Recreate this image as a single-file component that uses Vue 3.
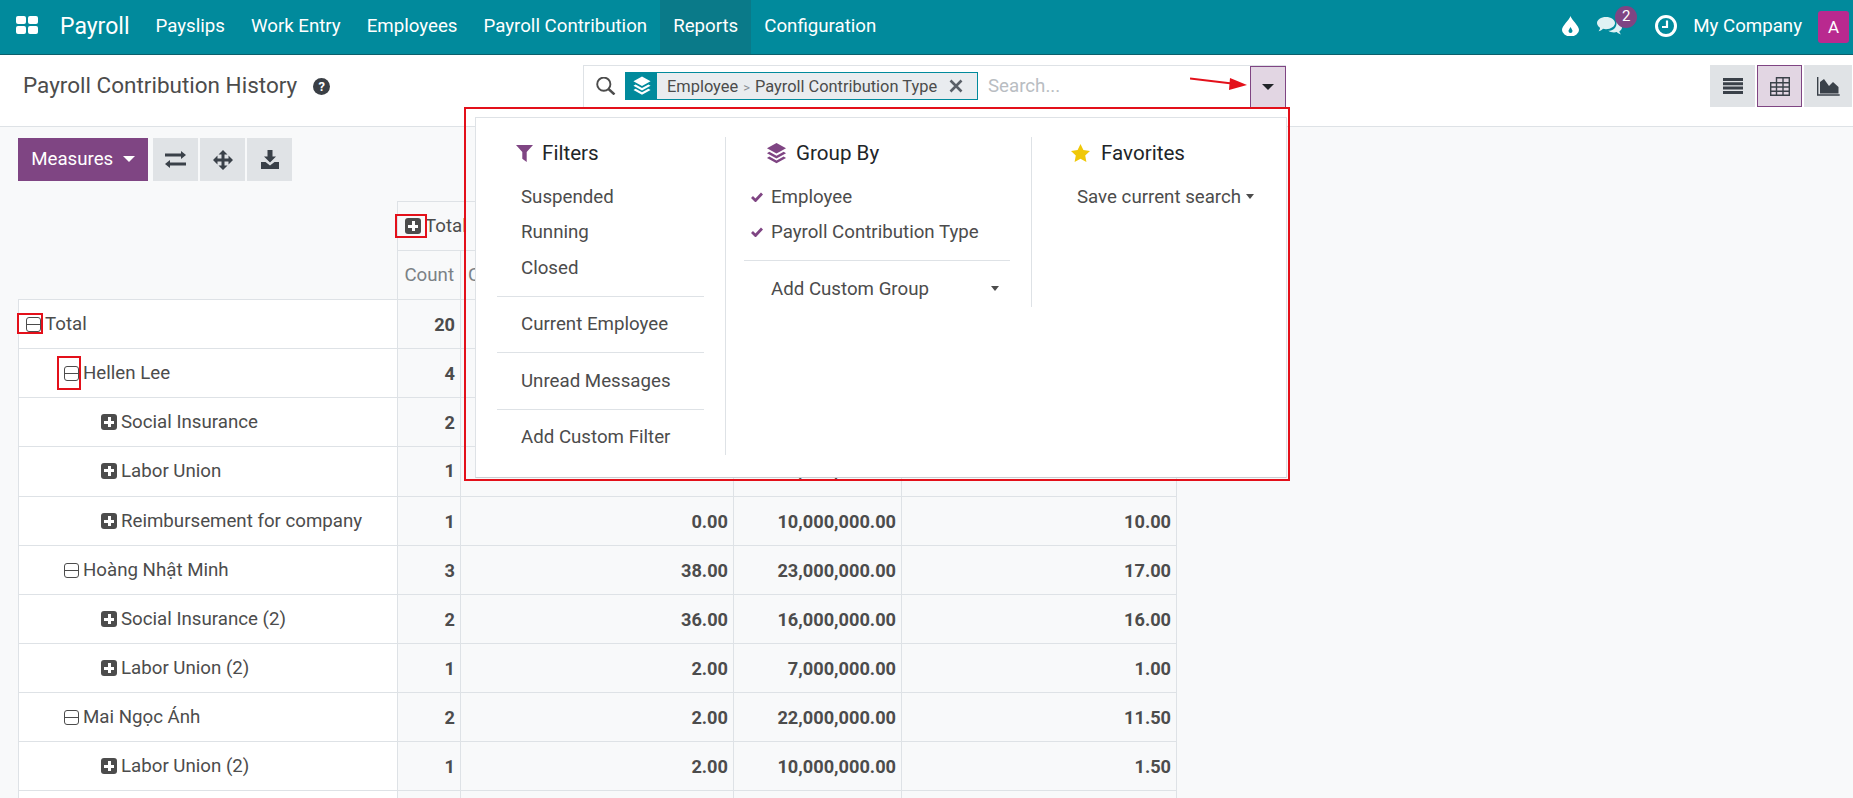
<script setup>
const navItems = ['Payslips', 'Work Entry', 'Employees', 'Payroll Contribution', 'Reports', 'Configuration']

const columns = ['Count', 'Contribution Amount of Employee', 'Amount', 'Rate']

const rows = [
  { label: 'Total', level: 0, open: true, values: ['20', '78.00', '85,000,000.00', '52.00'] },
  { label: 'Hellen Lee', level: 1, open: true, values: ['4', '2.00', '20,000,000.00', '12.00'] },
  { label: 'Social Insurance', level: 2, values: ['2', '2.00', '5,000,000.00', '1.00'] },
  { label: 'Labor Union', level: 2, tall: true, values: ['1', '0.00', '5,000,000.00', '1.00'] },
  { label: 'Reimbursement for company', level: 2, values: ['1', '0.00', '10,000,000.00', '10.00'] },
  { label: 'Hoàng Nhật Minh', level: 1, open: true, values: ['3', '38.00', '23,000,000.00', '17.00'] },
  { label: 'Social Insurance (2)', level: 2, values: ['2', '36.00', '16,000,000.00', '16.00'] },
  { label: 'Labor Union (2)', level: 2, values: ['1', '2.00', '7,000,000.00', '1.00'] },
  { label: 'Mai Ngọc Ánh', level: 1, open: true, values: ['2', '2.00', '22,000,000.00', '11.50'] },
  { label: 'Labor Union (2)', level: 2, values: ['1', '2.00', '10,000,000.00', '1.50'] },
  { label: '', level: 2, empty: true, values: ['', '', '', ''] }
]
</script>

<template>
  <div class="page">
    <header class="navbar">
      <svg class="apps" width="22" height="18" viewBox="0 0 22 18">
        <rect x="0" y="0" width="10" height="8" rx="2" />
        <rect x="12" y="0" width="10" height="8" rx="2" />
        <rect x="0" y="10" width="10" height="8" rx="2" />
        <rect x="12" y="10" width="10" height="8" rx="2" />
      </svg>
      <span class="brand">Payroll</span>
      <a v-for="item in navItems" :key="item" class="nav-item" :class="{ active: item === 'Reports' }">{{ item }}</a>
      <div class="systray">
        <svg class="tray-drop" width="17" height="20" viewBox="0 0 17 20">
          <path fill-rule="evenodd" d="M8.5 0C9.5 4 17 9.500 17 14a8.500 6.500 0 0 1-17 0C0 9.500 7.500 4 8.500 0ZM8.500 11C7.500 13 6.500 14 6.500 15a2 2 0 0 0 4 0C10.500 14 9.500 13 8.500 11Z" />
        </svg>
        <div class="tray-chat">
          <svg width="25" height="20" viewBox="0 0 25 20">
            <path d="M9 1c5 0 9 2.700 9 6s-4 6.200-9 6.200c-1 0-2-.1-3-.4C4.700 14.400 3 15 1.500 15.300 2.500 14 3 13 3 11.700 1.200 10.500 0 8.800 0 7c0-3.300 4-6 9-6Z" />
            <path d="M19.500 6c3 1 5.500 2.800 5.500 5.200 0 1.600-1 3-2.600 4 .1 1.100.6 2 1.600 3.200-1.500-.3-3-.9-4.200-2.300-.9.2-1.800.3-2.800.3-2.200 0-4.300-.6-5.700-1.600 5 0 8.700-3.200 8.200-8.800Z" />
          </svg>
          <span class="badge">2</span>
        </div>
        <svg class="tray-clock" width="24" height="24" viewBox="0 0 24 24">
          <circle cx="12" cy="12" r="9.500" fill="none" stroke="#fff" stroke-width="3" />
          <path d="M13 6.500V13H8" fill="none" stroke="#fff" stroke-width="2.200" />
        </svg>
        <span class="company">My Company</span>
        <span class="avatar">A</span>
      </div>
    </header>

    <section class="control-panel">
      <div class="title">
        Payroll Contribution History
        <span class="help">?</span>
      </div>
      <div class="searchbar">
        <svg class="search-icon" width="20" height="18" viewBox="0 0 20 18">
          <circle cx="7.800" cy="7.200" r="6.600" fill="none" stroke="#4c4c4c" stroke-width="1.900" />
          <path d="M12.500 12l6 5.500" stroke="#4c4c4c" stroke-width="2.400" />
        </svg>
        <div class="facet">
          <span class="facet-icon">
            <svg width="18" height="20" viewBox="0 0 21 22">
              <path d="M10.500 0l10 5.500-10 5.500L.5 5.500z" fill="#fff" />
              <path d="M3 9.200l7.500 4.100L18 9.200l2.500 1.500-10 5.500-10-5.500z" fill="#fff" />
              <path d="M3 14.200l7.500 4.100 7.500-4.100 2.500 1.500-10 5.500-10-5.500z" fill="#fff" />
            </svg>
          </span>
          <span class="facet-text">Employee<span class="facet-sep">&gt;</span>Payroll Contribution Type</span>
          <svg class="facet-close" width="14" height="14" viewBox="0 0 14 14"><path d="M1.500 1.500l11 11M12.500 1.500l-11 11" stroke="#5a6068" stroke-width="2.600" /></svg>
        </div>
        <span class="placeholder">Search...</span>
        <button class="search-toggle"><i class="caret dark"></i></button>
      </div>
      <div class="views">
        <button class="view-btn">
          <svg width="20" height="16" viewBox="0 0 20 16"><path d="M0 0h20v3H0zM0 4.300h20v3H0zM0 8.600h20v3H0zM0 12.900h20V16H0z" fill="#3a4149" /></svg>
        </button>
        <button class="view-btn on">
          <svg width="20" height="19" viewBox="0 0 20 19">
            <path d="M6.500.7h12.800v17.600H.7V5.800h5.800zM.7 5.800h18.600M.7 10h18.600M.7 14.200h18.600M6.500 5.800v12.500M13 .7v17.600" fill="none" stroke="#3a4149" stroke-width="1.400" />
          </svg>
        </button>
        <button class="view-btn">
          <svg width="23" height="19" viewBox="0 0 23 19">
            <path d="M.7 0v18h22" fill="none" stroke="#3a4149" stroke-width="1.400" />
            <path d="M3 16.500V5l4-3 5 7 4-4 5.500 5v6.500z" fill="#3a4149" />
          </svg>
        </button>
      </div>
    </section>

    <main class="content">
      <div class="toolbar">
        <button class="measures">Measures <i class="caret light"></i></button>
        <button class="tool-btn">
          <svg width="21" height="17" viewBox="0 0 21 17"><path d="M16 0v2.500H0v3h16V8l5-4zM5 9L0 13l5 4v-2.500h16v-3H5z" fill="#3a4149" /></svg>
        </button>
        <button class="tool-btn">
          <svg width="20" height="20" viewBox="0 0 20 20"><path d="M10 0l4.500 4.500h-3v4h4v-3L20 10l-4.500 4.500v-3h-4v4h3L10 20l-4.500-4.500h3v-4h-4v3L0 10l4.500-4.500v3h4v-4h-3z" fill="#3a4149" /></svg>
        </button>
        <button class="tool-btn">
          <svg width="18" height="19" viewBox="0 0 18 19"><path d="M6.500 0h5v6.500H15l-6 6-6-6h3.500zM0 12h4.500L9 15.500 13.500 12H18v7H0z" fill="#3a4149" /></svg>
        </button>
      </div>

      <table class="pivot">
        <colgroup>
          <col class="c-label" /><col class="c-count" /><col class="c-a" /><col class="c-b" /><col class="c-c" />
        </colgroup>
        <thead>
          <tr class="head-row">
            <th class="blank" rowspan="2"></th>
            <th class="head-total" colspan="4">
              <span class="sq-plus"></span><span>Total</span>
            </th>
          </tr>
          <tr class="head-row">
            <th v-for="(col, j) in columns" :key="col" class="head-col" :class="{ long: j === 1 }"><span>{{ col }}</span></th>
          </tr>
        </thead>
        <tbody>
          <tr v-for="(row, i) in rows" :key="i" :class="{ tall: row.tall }">
            <td class="label" :class="'lvl-' + row.level">
              <template v-if="!row.empty">
                <span :class="row.open ? 'sq-minus' : 'sq-plus'"></span>{{ row.label }}
              </template>
            </td>
            <td v-for="(val, j) in row.values" :key="j" class="num">{{ val }}</td>
          </tr>
        </tbody>
      </table>
    </main>

    <!-- search dropdown, open over the table -->
    <div class="menu">
      <div class="menu-col col-filters">
        <div class="menu-head head-filters">
          <svg width="17" height="17" viewBox="0 0 17 17"><path d="M0 0h17l-6.300 7v10l-4.400-3.200V7z" fill="#7f4583" /></svg>
          Filters
        </div>
        <div class="menu-item">Suspended</div>
        <div class="menu-item">Running</div>
        <div class="menu-item">Closed</div>
        <div class="menu-sep"></div>
        <div class="menu-item">Current Employee</div>
        <div class="menu-sep"></div>
        <div class="menu-item">Unread Messages</div>
        <div class="menu-sep"></div>
        <div class="menu-item">Add Custom Filter</div>
      </div>
      <div class="menu-col col-group">
        <div class="menu-head head-group">
          <svg width="21" height="21" viewBox="0 0 21 22">
            <path d="M10.500 0l10 5.500-10 5.500L.5 5.500z" fill="#7f4583" />
            <path d="M3 9.200l7.500 4.100L18 9.200l2.500 1.500-10 5.500-10-5.500z" fill="#7f4583" />
            <path d="M3 14.200l7.500 4.100 7.500-4.100 2.500 1.500-10 5.500-10-5.500z" fill="#7f4583" />
          </svg>
          Group By
        </div>
        <div class="menu-item checked">
          <svg width="12" height="10" viewBox="0 0 12 10"><path d="M1 5l3.500 3.500L11 1.500" fill="none" stroke="#7f4583" stroke-width="2.800" /></svg>
          Employee
        </div>
        <div class="menu-item checked">
          <svg width="12" height="10" viewBox="0 0 12 10"><path d="M1 5l3.500 3.500L11 1.500" fill="none" stroke="#7f4583" stroke-width="2.800" /></svg>
          Payroll Contribution Type
        </div>
        <div class="menu-sep"></div>
        <div class="menu-item custom-group">Add Custom Group <i class="caret small"></i></div>
      </div>
      <div class="menu-col col-fav">
        <div class="menu-head head-fav">
          <svg width="19" height="18" viewBox="0 0 19 18"><path d="M9.500 0l2.900 6 6.600.9-4.800 4.600 1.200 6.500-5.900-3.200L3.600 18l1.200-6.500L0 6.900 6.600 6z" fill="#f0c808" /></svg>
          Favorites
        </div>
        <div class="menu-item save">Save current search<i class="caret small"></i></div>
      </div>
    </div>

    <!-- red annotations drawn on the screenshot -->
    <div class="mark mark-menu"></div>
    <div class="mark mark-head"></div>
    <div class="mark mark-total"></div>
    <div class="mark mark-hellen"></div>
    <svg class="mark-arrow" width="58" height="14" viewBox="0 0 58 14">
      <path d="M0 1.500L42 6.500" stroke="#e3101a" stroke-width="2" />
      <path d="M40 1L57 8 39 13z" fill="#e3101a" />
    </svg>
  </div>
</template>

<style scoped>
.page {
  position: relative;
  width: 1853px;
  height: 798px;
  overflow: hidden;
  background: #f8f9fa;
  font-family: Roboto, "Noto Sans", sans-serif;
  font-size: 18.700px;
  color: #4c4c4c;
}
.navbar {
  display: flex;
  align-items: center;
  height: 54px;
  background: #018a9c;
  border-bottom: 1px solid #0b5f6b;
  color: #fff;
}
.apps {
  margin-left: 16px;
  margin-bottom: 4px;
  fill: #fff;
}
.brand {
  margin-left: 22px;
  margin-right: 13px;
  margin-bottom: 1px;
  font-size: 23px;
}
.nav-item {
  display: flex;
  align-items: center;
  height: 100%;
  padding: 0 13px 2px;
  box-sizing: border-box;
  font-size: 18.700px;
}
.nav-item.active {
  background: #0a7a89;
}
.systray {
  display: flex;
  align-items: center;
  margin-left: auto;
}
.tray-drop {
  fill: #fff;
  margin-right: 18px;
  margin-bottom: 2px;
}
.tray-chat {
  position: relative;
  width: 25px;
  height: 20px;
  margin-right: 32px;
  margin-bottom: 2px;
  fill: #dff2f4;
}
.badge {
  position: absolute;
  left: 18px;
  top: -10px;
  width: 22px;
  height: 22px;
  border-radius: 50%;
  background: #7f4583;
  text-align: center;
  font-size: 15px;
  line-height: 20px;
}
.tray-clock {
  margin-right: 15px;
  margin-bottom: 2px;
}
.company {
  margin-right: 16px;
  margin-bottom: 2px;
}
.avatar {
  width: 31px;
  height: 32px;
  margin-right: 4px;
  border-radius: 3px;
  background: #b9298f;
  text-align: center;
  line-height: 32px;
  font-size: 17px;
}
.control-panel {
  display: grid;
  grid-template-columns: 583px 703px 1fr;
  height: 72px;
  box-sizing: border-box;
  background: #fff;
  border-bottom: 1px solid #dee2e6;
}
.title {
  display: flex;
  align-items: center;
  height: 60px;
  padding-left: 23px;
  font-size: 22.500px;
  color: #4c4c4c;
}
.help {
  width: 17px;
  height: 17px;
  margin-left: 16px;
  margin-top: 2px;
  border-radius: 50%;
  background: #3a3f45;
  color: #fff;
  font-size: 13px;
  font-weight: 700;
  line-height: 17px;
  text-align: center;
}
.searchbar {
  display: flex;
  align-items: center;
  height: 43px;
  margin-top: 10px;
  box-sizing: border-box;
  padding: 0 0 2px 12px;
  border: 1px solid #dee2e6;
  border-width: 1px 0 0 1px;
}
.search-icon {
  flex: none;
  margin-right: 9px;
}
.facet {
  display: flex;
  align-items: center;
  width: 353px;
  height: 28px;
  box-sizing: border-box;
  border: 1px solid #018a9c;
  background: #e9ecef;
  font-size: 16.400px;
}
.facet-icon {
  display: flex;
  align-items: center;
  justify-content: center;
  width: 31px;
  height: 100%;
  background: #018a9c;
}
.facet-text {
  margin-left: 10px;
  white-space: nowrap;
}
.facet-sep {
  margin: 0 5px;
  font-size: 13px;
  color: #8a8f95;
}
.facet-close {
  margin-left: 12px;
}
.placeholder {
  margin-left: 10px;
  color: #b9bdc2;
}
.search-toggle {
  display: flex;
  align-self: flex-start;
  align-items: center;
  justify-content: center;
  width: 36px;
  height: 42px;
  margin-left: auto;
  padding: 0;
  background: #e2d6e3;
  border: 1px solid #7f4583;
}
.caret {
  display: inline-block;
  width: 0;
  height: 0;
  border-style: solid;
  border-color: currentColor transparent transparent;
  border-width: 6px 6px 0;
}
.caret.dark {
  color: #212529;
}
.caret.light {
  color: #fff;
  margin-left: 5px;
  vertical-align: 3px;
}
.caret.small {
  border-width: 5px 4.500px 0;
  vertical-align: 3px;
}
.views {
  display: flex;
  justify-content: flex-end;
  gap: 2px;
  padding: 10px 1px 0 0;
}
.view-btn {
  display: flex;
  align-items: center;
  justify-content: center;
  width: 45px;
  height: 42px;
  padding: 0;
  border: 0;
  background: #e0e3e6;
}
.view-btn:last-child {
  width: 48px;
}
.view-btn.on {
  background: #e2d6e3;
  border: 1px solid #7f4583;
}
.content {
  padding: 11px 0 0 18px;
}
.toolbar {
  display: flex;
  height: 43px;
  margin-bottom: 20px;
}
.measures {
  width: 130px;
  padding: 0 0 2px;
  margin-right: 5px;
  border: 0;
  background: #7f4583;
  color: #fff;
  font-family: inherit;
  font-size: 18.700px;
}
.tool-btn {
  display: flex;
  align-items: center;
  justify-content: center;
  width: 45px;
  margin-right: 2px;
  padding: 0;
  border: 0;
  background: #e0e3e6;
}
.pivot {
  width: 1158px;
  table-layout: fixed;
  border-collapse: collapse;
}
.c-label { width: 379px; }
.c-count { width: 63px; }
.c-a { width: 273px; }
.c-b { width: 168px; }
.c-c { width: 275px; }
.head-row {
  height: 49px;
}
.pivot th {
  border: 1px solid #dee2e6;
  font-weight: 400;
}
.pivot th.blank {
  border-width: 0 1px 1px 0;
}
.head-total {
  text-align: left;
  padding: 0 0 0 7px;
  white-space: nowrap;
}
.head-col {
  padding: 0 6px;
  text-align: right;
  color: #7b8186;
  white-space: nowrap;
}
.head-col.long {
  padding-left: 7px;
  text-align: left;
  overflow: hidden;
}
.pivot td {
  height: 48px;
  padding: 0 5px 0 0;
  border: 1px solid #dee2e6;
}
/* this row is a pixel taller in the reference, text stays high */
.pivot .tall td {
  height: 47px;
  padding-bottom: 2px;
}
.label {
  background: #fff;
  white-space: nowrap;
}
.lvl-0 { padding-left: 7px !important; }
.lvl-1 { padding-left: 45px !important; }
.lvl-2 { padding-left: 82px !important; }
.num {
  background: #f8f9fa;
  text-align: right;
  font-size: 18.200px;
  font-weight: 700;
  color: #4c4c4c;
}
.sq-plus,
.sq-minus {
  position: relative;
  display: inline-block;
  width: 16px;
  height: 16px;
  margin-right: 4px;
  box-sizing: border-box;
  border-radius: 3px;
  vertical-align: -2px;
}
.sq-plus {
  background: #4c4c4c;
}
.sq-plus::before,
.sq-plus::after,
.sq-minus::before {
  content: "";
  position: absolute;
  background: #fff;
}
.sq-plus::before {
  left: 3px;
  top: 6.500px;
  width: 10px;
  height: 3px;
}
.sq-plus::after {
  left: 6.500px;
  top: 3px;
  width: 3px;
  height: 10px;
}
.sq-minus {
  width: 15px;
  height: 15px;
  border: 1.300px solid #4c4c4c;
}
.sq-minus::before {
  left: 0;
  top: 5.500px;
  width: 100%;
  height: 1.300px;
  background: #4c4c4c;
}
.menu {
  position: absolute;
  left: 475px;
  top: 117px;
  display: flex;
  align-items: flex-start;
  width: 812px;
  height: 360.500px;
  box-sizing: border-box;
  padding-top: 19px;
  background: #fff;
  border: 1px solid #dee2e6;
  border-bottom-color: #c9ced3;
}
.menu-col {
  box-sizing: border-box;
}
.col-filters {
  width: 250px;
  border-right: 1px solid #dee2e6;
}
.col-group {
  width: 306px;
  border-right: 1px solid #dee2e6;
}
.col-fav {
  flex: 1;
}
.menu-head {
  display: flex;
  align-items: center;
  height: 32px;
  margin-bottom: 10px;
  font-size: 20.600px;
  color: #212529;
}
.head-filters {
  padding-left: 40px;
  gap: 9px;
}
.head-group {
  padding-left: 40px;
  gap: 9px;
}
.head-fav {
  padding-left: 39px;
  gap: 11px;
}
.menu-item {
  display: flex;
  align-items: center;
  height: 35.500px;
  padding-left: 45px;
  white-space: nowrap;
}
.menu-item.checked {
  gap: 8px;
  padding-left: 25px;
}
.menu-item.custom-group {
  justify-content: space-between;
  padding-right: 32px;
}
.menu-item.save {
  padding-left: 45px;
}
.save .caret {
  margin-left: 5px;
}
.menu-sep {
  height: 1px;
  margin: 10px 21px;
  background: #dee2e6;
}
.col-group .menu-sep {
  margin-left: 18px;
}
.mark {
  position: absolute;
  box-sizing: border-box;
  border: 2px solid #e3101a;
}
.mark-menu {
  left: 464px;
  top: 107px;
  width: 826px;
  height: 374px;
  border-width: 2.500px;
}
.mark-head {
  left: 395px;
  top: 214px;
  width: 32px;
  height: 24px;
}
.mark-total {
  left: 17px;
  top: 313px;
  width: 26px;
  height: 21px;
}
.mark-hellen {
  left: 57px;
  top: 356px;
  width: 24px;
  height: 34px;
}
.mark-arrow {
  position: absolute;
  left: 1190px;
  top: 77px;
}
</style>
